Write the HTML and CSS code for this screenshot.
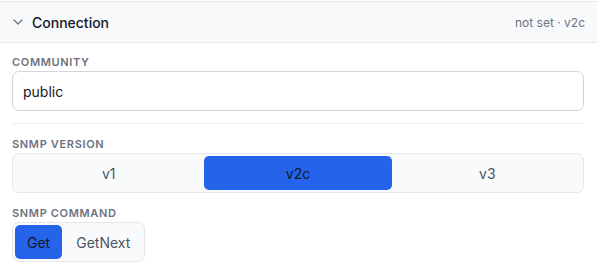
FILE: index.html
```html
<!DOCTYPE html>
<html lang="en">
<head>
    <meta charset="UTF-8">
    <meta name="viewport" content="width=device-width, initial-scale=1.0">
    <title>Connection</title>
    <link rel="stylesheet" href="styles.css">
</head>
<body>
    <section class="panel">
        <div class="panel-header">
            <div class="panel-title">
                <svg class="chevron" width="10" height="6" viewBox="0 0 10 6" fill="none">
                    <path d="M1 1l4 4 4-4" stroke="#6b7280" stroke-width="1.3" stroke-linecap="round" stroke-linejoin="round"/>
                </svg>
                <span>Connection</span>
            </div>
            <span class="panel-summary">not set · v2c</span>
        </div>

        <div class="panel-body">
            <label class="field-label" for="community">Community</label>
            <input id="community" class="text-input" type="text" value="public">

            <hr class="divider">

            <div class="field-label">SNMP Version</div>
            <div class="segmented versions">
                <button class="seg">v1</button>
                <button class="seg active">v2c</button>
                <button class="seg">v3</button>
            </div>

            <div class="field-label">SNMP Command</div>
            <div class="segmented commands">
                <button class="seg active">Get</button>
                <button class="seg">GetNext</button>
            </div>
        </div>
    </section>
</body>
</html>
```

FILE: styles.css
```css
* {
    box-sizing: border-box;
    margin: 0;
    padding: 0;
}
body {
    font-family: Inter, 'Noto Sans', sans-serif;
    color: #111827;
    background: #ffffff;
    padding-top: 1px;
}
.panel-header {
    height: 42px;
    display: flex;
    align-items: center;
    justify-content: space-between;
    padding: 0 12px 0 13px;
    background: #f8f9fb;
    border-top: 1px solid #e5e7eb;
    border-bottom: 1px solid #e5e7eb;
}
.panel-title {
    display: flex;
    align-items: center;
    gap: 9px;
    font-size: 14px;
    font-weight: 500;
}
.panel-summary {
    font-size: 12px;
    color: #6b7280;
}
.panel-body {
    padding: 11px 13px 0 12px;
}
.field-label {
    display: block;
    font-size: 11px;
    font-weight: 600;
    line-height: 16px;
    letter-spacing: 0.06em;
    text-transform: uppercase;
    color: #6b7280;
    margin-bottom: 1px;
}
.text-input {
    display: block;
    width: 100%;
    height: 40px;
    padding: 0 10px;
    border: 1px solid #d1d5db;
    border-radius: 7px;
    font-family: inherit;
    font-size: 14px;
    color: #111827;
    background: #ffffff;
}
.divider {
    border: none;
    border-top: 1px solid #eef0f3;
    margin: 12px 0;
}
.segmented {
    display: flex;
    gap: 2px;
    height: 40px;
    padding: 2px;
    border: 1px solid #e5e7eb;
    border-radius: 7px;
    background: #f9fafb;
    margin-bottom: 12px;
}
.segmented.commands {
    display: inline-flex;
}
.seg {
    border: none;
    background: none;
    border-radius: 5px;
    font-family: inherit;
    font-size: 14px;
    color: #4b5563;
    cursor: pointer;
}
.versions .seg {
    flex: 1;
}
.commands .seg {
    padding: 0 12px;
}
.seg.active {
    background: #2563eb;
    color: #111827;
}
```
